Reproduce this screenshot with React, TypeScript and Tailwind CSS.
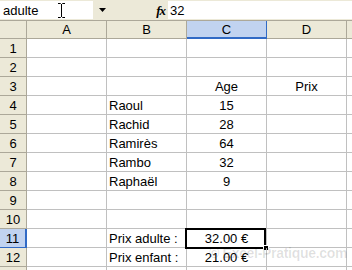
import React from 'react';

const cols = ['A', 'B', 'C', 'D'];

type Row = { b?: string; c?: string; d?: string };

const rows: Row[] = [
  {},
  {},
  { c: 'Age', d: 'Prix' },
  { b: 'Raoul', c: '15' },
  { b: 'Rachid', c: '28' },
  { b: 'Ramirès', c: '64' },
  { b: 'Rambo', c: '32' },
  { b: 'Raphaël', c: '9' },
  {},
  {},
  { b: 'Prix adulte :', c: '32.00 €' },
  { b: 'Prix enfant :', c: '21.00 €' },
  {},
];

export default function App() {
  return (
    <div className="relative w-[352px] h-[270px] overflow-hidden bg-white text-black text-[13px] leading-none font-['Liberation_Sans',Arial,sans-serif]">
      {/* formula bar */}
      <div className="flex h-[21px] items-start bg-[#ECE9D8] pt-px border-b border-[#ACA899]">
        <div className="relative flex h-[18px] w-[93px] items-center bg-white pl-[3px]">
          adulte
          <svg className="absolute left-[57px] top-[2px]" width="9" height="15" viewBox="0 0 9 15">
            <path d="M1 0.5h2.5M5.5 0.5H8M4.5 1v13M1 14.5h2.5M5.5 14.5H8M3.5 0.5l1 1 1-1M3.5 14.5l1-1 1 1" stroke="#000" strokeWidth="1" fill="none" />
          </svg>
        </div>
        <div className="flex h-[18px] w-[20px] items-center pl-[6px]">
          <svg width="7" height="4" viewBox="0 0 7 4">
            <path d="M0 0h7L3.5 4z" fill="#000" />
          </svg>
        </div>
        <div className="flex h-[18px] w-[55px] items-center justify-end pr-[3px]">
          <span className="font-['Liberation_Serif',serif] italic font-bold text-[13px] tracking-[-1px]">fx</span>
        </div>
        <div className="flex h-[18px] flex-1 items-center bg-white pl-[2px]">32</div>
      </div>

      {/* sheet */}
      <div className="grid grid-cols-[27px_80px_80px_80px_80px_1fr] grid-rows-[18px_repeat(13,19px)]">
        <div className="bg-[#ECE9D8] border-r border-b border-[#ACA899]" />
        {cols.map((c) => (
          <div
            key={c}
            className={
              c === 'C'
                ? 'flex items-center justify-center bg-[#C1D3F0] border-r border-b-2 border-[#316AC5]'
                : 'flex items-center justify-center bg-[#ECE9D8] border-r border-b border-[#ACA899]'
            }
          >
            {c}
          </div>
        ))}
        <div className="bg-[#ECE9D8] border-b border-[#ACA899]" />

        {rows.map((r, i) => {
          const n = i + 1;
          const sel = n === 11;
          return (
            <React.Fragment key={n}>
              <div
                className={
                  sel
                    ? 'flex items-center justify-center bg-[#C1D3F0] border-r-2 border-b border-[#316AC5]'
                    : 'flex items-center justify-center bg-[#ECE9D8] border-r border-b border-[#ACA899]'
                }
              >
                {n < 13 ? n : null}
              </div>
              <div className="border-r border-b border-[#C0C0C0]" />
              <div className="flex items-center pl-[2px] border-r border-b border-[#C0C0C0]">{r.b}</div>
              <div className="relative flex items-center justify-center border-r border-b border-[#C0C0C0]">
                {r.c}
                {sel && (
                  <>
                    <div className="absolute -left-[2px] -top-px right-0 -bottom-[2px] border-2 border-black" />
                    <div className="absolute -right-[3px] -bottom-[4px] h-[6px] w-[6px] bg-black border border-white" />
                  </>
                )}
              </div>
              <div className="flex items-center justify-center border-r border-b border-[#C0C0C0]">{r.d}</div>
              <div className="border-b border-[#C0C0C0]" />
            </React.Fragment>
          );
        })}
      </div>

      {/* watermark */}
      <div className="pointer-events-none absolute left-[209px] top-[246px] whitespace-nowrap font-['Liberation_Sans',Arial,sans-serif] font-bold text-[14px] text-black/[0.12] tracking-[-0.3px]">
        © Excel-Pratique.com
      </div>
    </div>
  );
}
